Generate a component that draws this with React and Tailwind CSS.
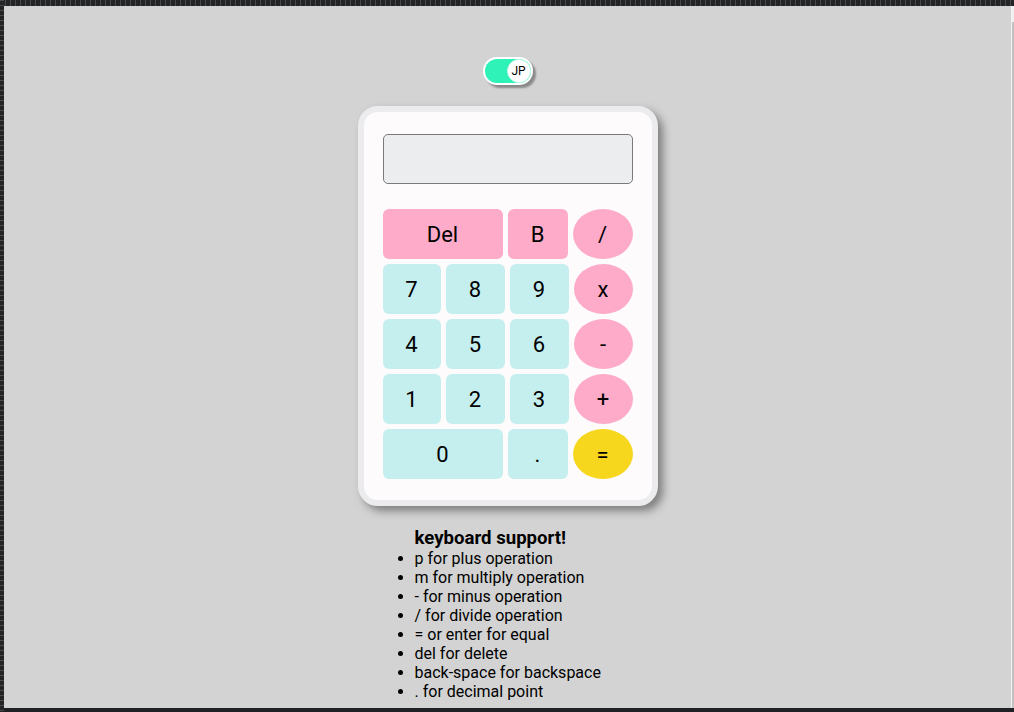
import React from 'react';

const ROWS = [
    [
        { label: 'Del', w: 'w-[120px]', kind: 'fn' },
        { label: 'B', w: 'w-[60px]', kind: 'fn' },
        { label: '/', w: 'w-[60px]', kind: 'op' },
    ],
    [
        { label: '7', w: 'w-[58px]' },
        { label: '8', w: 'w-[59px]' },
        { label: '9', w: 'w-[59px]' },
        { label: 'x', w: 'w-[59px]', kind: 'op' },
    ],
    [
        { label: '4', w: 'w-[58px]' },
        { label: '5', w: 'w-[59px]' },
        { label: '6', w: 'w-[59px]' },
        { label: '-', w: 'w-[59px]', kind: 'op' },
    ],
    [
        { label: '1', w: 'w-[58px]' },
        { label: '2', w: 'w-[59px]' },
        { label: '3', w: 'w-[59px]' },
        { label: '+', w: 'w-[59px]', kind: 'op' },
    ],
    [
        { label: '0', w: 'w-[120px]' },
        { label: '.', w: 'w-[60px]' },
        { label: '=', w: 'w-[60px]', kind: 'eq' },
    ],
];

const KEYS = [
    'p for plus operation',
    'm for multiply operation',
    '- for minus operation',
    '/ for divide operation',
    '= or enter for equal',
    'del for delete',
    'back-space for backspace',
    '. for decimal point',
];

function keyStyle(kind) {
    if (kind === 'fn') return 'bg-[#fdabc9] rounded-[6px]';
    if (kind === 'op') return 'bg-[#fdabc9] rounded-[50%]';
    if (kind === 'eq') return 'bg-[#f7d61e] rounded-[50%]';
    return 'bg-[#c5efee] rounded-[6px]';
}

export default function App() {
    return (
        <div
            className="w-[1014px] h-[712px] bg-[#202124] pt-[6px] pl-[4px] pb-[4px] flex overflow-hidden relative"
            style={{ fontFamily: 'Roboto, "Noto Sans", sans-serif' }}
        >
            {/* frame ticks */}
            <div className="absolute top-0 left-0 w-full h-[6px] bg-[repeating-linear-gradient(90deg,#4a4a4a_0_1px,#232426_1px_5px)]" />
            <div className="absolute top-0 left-0 w-[4px] h-full bg-[repeating-linear-gradient(180deg,#4a4a4a_0_1px,#232426_1px_5px)]" />

            <div className="flex-1 bg-[#d3d3d3] flex flex-col items-center pt-[51px]">
                {/* language toggle */}
                <div className="w-[50px] h-[28px] rounded-full bg-white p-[2px] shadow-[3px_3px_2px_#8a8a8a]">
                    <div className="w-full h-full rounded-full bg-[#2ef2b7] flex justify-end">
                        <div className="w-[24px] h-[24px] rounded-full bg-white border border-[#c8f6ea] flex items-center justify-center text-[12px] text-black">
                            JP
                        </div>
                    </div>
                </div>

                {/* calculator */}
                <div className="mt-[21px] w-[300px] h-[400px] rounded-[20px] border-[6px] border-[#ececee] bg-[#fdfbfc] shadow-[5px_5px_8px_#7f7f7f] pt-[22px] px-[19px]">
                    <div className="w-[250px] h-[50px] rounded-[5px] border border-[#7a7a7a] bg-[#ecedef]" />
                    <div className="mt-[25px] flex flex-col gap-[5px]">
                        {ROWS.map((row, i) => (
                            <div key={i} className="flex gap-[5px]">
                                {row.map(k => (
                                    <div
                                        key={k.label}
                                        className={`${k.w} h-[50px] flex items-center justify-center text-[22px] text-black ${keyStyle(k.kind)}`}
                                    >
                                        {k.label}
                                    </div>
                                ))}
                            </div>
                        ))}
                    </div>
                </div>

                {/* keyboard help */}
                <div className="w-[300px] mt-[22px] text-black">
                    <div className="pl-[57px] text-[18.6px] font-bold leading-[21px]">keyboard support!</div>
                    <ul className="list-disc pl-[57px] text-[16px] leading-[19px]">
                        {KEYS.map(t => (
                            <li key={t}>{t}</li>
                        ))}
                    </ul>
                </div>
            </div>

            {/* scrollbar */}
            <div className="w-[3px] bg-[#f1f1f1] flex flex-col">
                <div className="h-[16px]" />
                <div className="flex-1 bg-[#c1c1c1] w-[2px] ml-[1px]" />
            </div>
        </div>
    );
}
